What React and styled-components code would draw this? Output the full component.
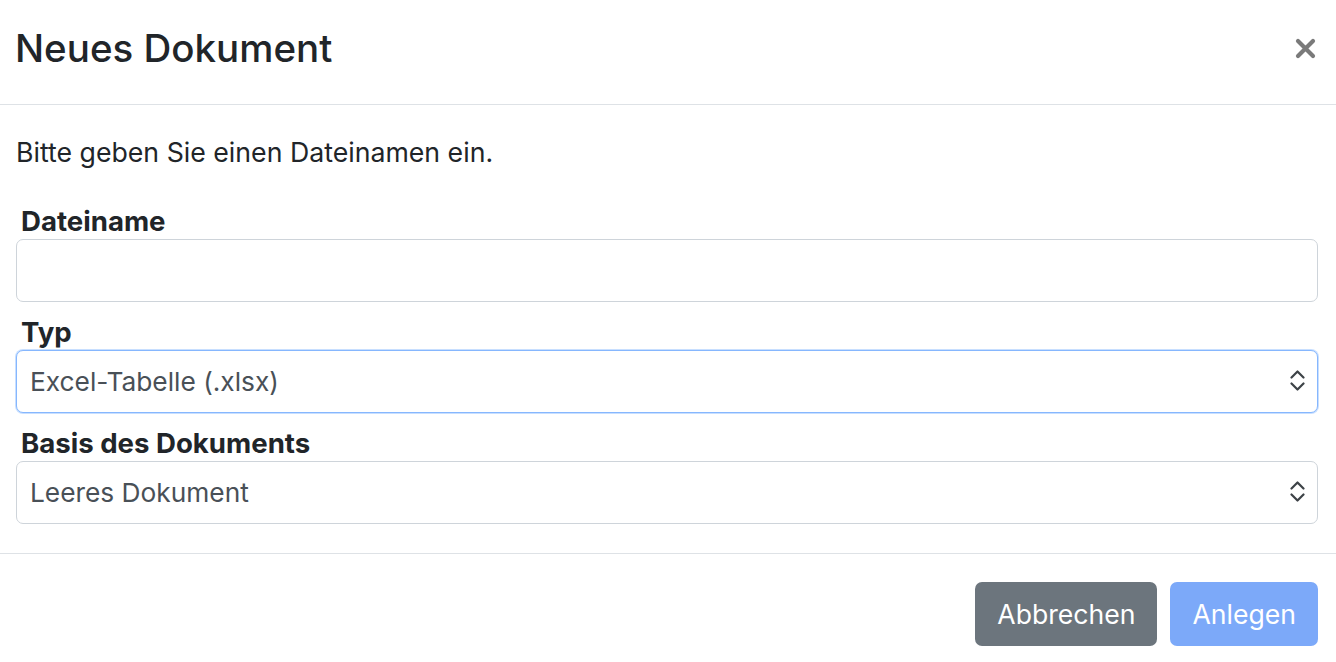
import React from "react";
import styled, { createGlobalStyle } from "styled-components";

const GlobalStyle = createGlobalStyle`
  html, body { margin: 0; padding: 0; background: #ffffff; }
  body {
    font-family: Inter, "Noto Sans", "Liberation Sans", sans-serif;
    color: #212529;
    -webkit-font-smoothing: antialiased;
  }
  * { box-sizing: border-box; }
`;

const Modal = styled.div`
  width: 1336px;
  height: 662px;
  background: #fff;
  display: flex;
  flex-direction: column;
  overflow: hidden;
`;

const Header = styled.div`
  display: flex;
  align-items: flex-start;
  justify-content: space-between;
  padding: 24px 20px 32px 15px;
  border-bottom: 1px solid #dee2e6;
`;

const Title = styled.h5`
  margin: 0;
  font-size: 38.5px;
  line-height: 48px;
  font-weight: 500;
  color: #212529;
`;

const CloseButton = styled.button`
  border: 0;
  background: transparent;
  padding: 0;
  margin-top: 13px;
  width: 22px;
  height: 22px;
  display: flex;
  align-items: center;
  justify-content: center;
  cursor: pointer;
`;

const Body = styled.div`
  padding: 29px 18px 29px 16px;
  display: flex;
  flex-direction: column;
`;

const Intro = styled.p`
  margin: 0 0 31px 0;
  font-size: 26.7px;
  line-height: 37.5px;
`;

const Group = styled.div`
  display: flex;
  flex-direction: column;
  & + & { margin-top: 12px; }
`;

const Label = styled.label`
  padding-left: 5px;
  font-size: 27.6px;
  line-height: 36px;
  font-weight: 700;
  color: #212529;
`;

const Input = styled.input`
  height: 63px;
  width: 100%;
  border: 1px solid #ced4da;
  border-radius: 7px;
  padding: 0 12px;
  font-family: inherit;
  font-size: 26.3px;
  color: #495057;
  background: #fff;
  outline: none;
`;

const SelectWrap = styled.div`
  height: 63px;
  border: 1px solid ${(p) => (p.$focused ? "#86b7fe" : "#ced4da")};
  box-shadow: ${(p) => (p.$focused ? "0 0 0 1px rgba(134, 183, 254, 0.45)" : "none")};
  border-radius: 7px;
  background: #fff;
  display: flex;
  align-items: center;
  padding: 0 12px 0 13px;
`;

const SelectValue = styled.span`
  flex: 1;
  font-size: 26.3px;
  color: #495057;
`;

const Chevrons = styled.svg`
  width: 15px;
  height: 22px;
  flex-shrink: 0;
`;

const Footer = styled.div`
  border-top: 1px solid #dee2e6;
  display: flex;
  justify-content: flex-end;
  gap: 13px;
  padding: 28px 18px 0 0;
`;

const Button = styled.button`
  height: 64px;
  padding: 0 22px;
  border: 0;
  border-radius: 7px;
  font-family: inherit;
  font-size: 26.6px;
  font-weight: 400;
  color: #fff;
  background: ${(p) => (p.$variant === "primary" ? "#7ca9f9" : "#6c757d")};
  cursor: ${(p) => (p.$variant === "primary" ? "default" : "pointer")};
`;

const ChevronIcon = () => (
  <Chevrons viewBox="0 0 15 22" fill="none">
    <path d="M1.5 7.5 L7.5 1.5 L13.5 7.5" stroke="#3d4247" strokeWidth="2.2" strokeLinecap="round" strokeLinejoin="round" />
    <path d="M1.5 13.5 L7.5 19.5 L13.5 13.5" stroke="#3d4247" strokeWidth="2.2" strokeLinecap="round" strokeLinejoin="round" />
  </Chevrons>
);

function Select({ value, focused }) {
  return (
    <SelectWrap $focused={focused}>
      <SelectValue>{value}</SelectValue>
      <ChevronIcon />
    </SelectWrap>
  );
}

export default function App() {
  return (
    <>
      <GlobalStyle />
      <Modal>
        <Header>
          <Title>Neues Dokument</Title>
          <CloseButton aria-label="Schließen">
            <svg width="21" height="21" viewBox="0 0 21 21">
              <path d="M3 3 L18 18 M18 3 L3 18" stroke="#7a7a7a" strokeWidth="4.2" strokeLinecap="round" />
            </svg>
          </CloseButton>
        </Header>
        <Body>
          <Intro>Bitte geben Sie einen Dateinamen ein.</Intro>
          <Group>
            <Label>Dateiname</Label>
            <Input type="text" />
          </Group>
          <Group>
            <Label>Typ</Label>
            <Select value="Excel-Tabelle (.xlsx)" focused />
          </Group>
          <Group>
            <Label>Basis des Dokuments</Label>
            <Select value="Leeres Dokument" />
          </Group>
        </Body>
        <Footer>
          <Button $variant="secondary">Abbrechen</Button>
          <Button $variant="primary" disabled>Anlegen</Button>
        </Footer>
      </Modal>
    </>
  );
}
